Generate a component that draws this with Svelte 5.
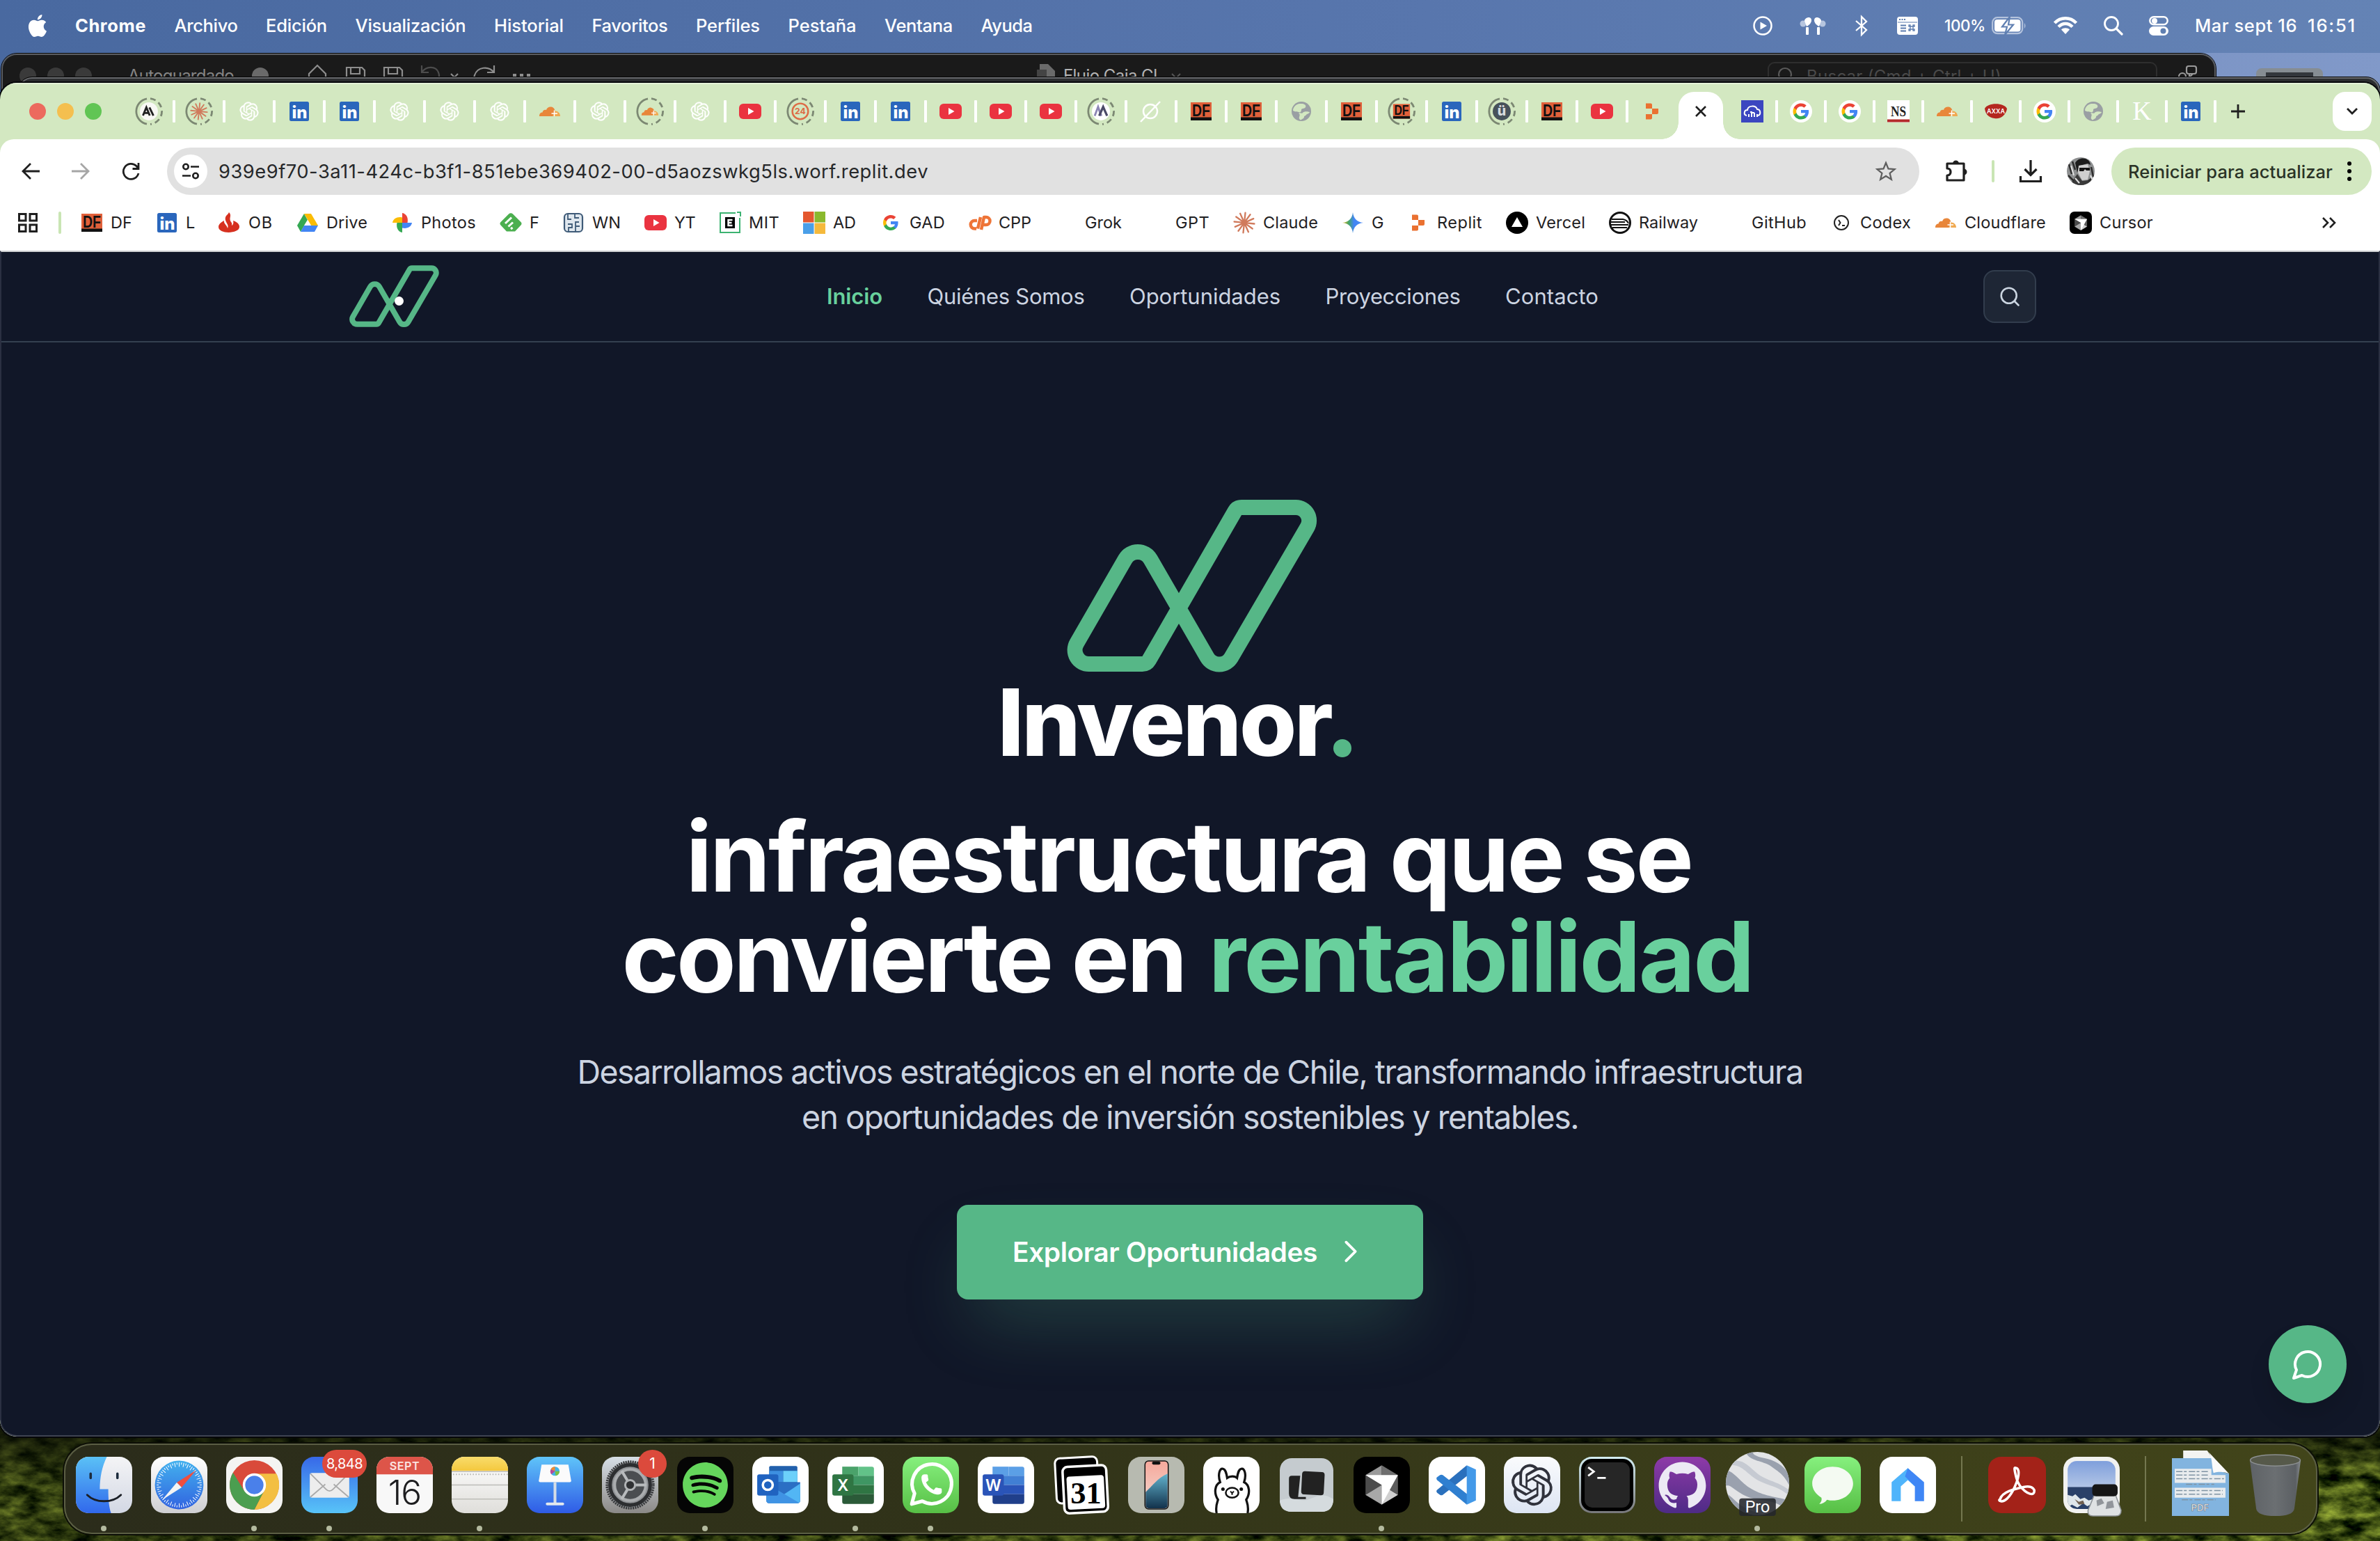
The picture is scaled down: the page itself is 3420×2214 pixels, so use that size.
<script>
  // Spreads or tightens the letters of an element so that it takes `target` pixels.
  function fit(node, target) {
    const natural = node.getBoundingClientRect().width;
    const count = Math.max(1, node.textContent.trim().length);
    node.style.letterSpacing = `${(target - natural) / count}px`;
  }

  const menus = [
    ['Archivo', 91], ['Edición', 88], ['Visualización', 159], ['Historial', 100],
    ['Favoritos', 109], ['Perfiles', 92], ['Pestaña', 98], ['Ventana', 98], ['Ayuda', 74]
  ];

  const tabs = [
    ['anthropic', 1], ['claude', 1], ['gpt'], ['in'], ['in'], ['gpt'], ['gpt'], ['gpt'], ['cloud'], ['gpt'],
    ['cloud', 1], ['gpt'], ['yt'], ['n24', 1], ['in'], ['in'], ['yt'], ['yt'], ['yt'], ['mm', 1], ['grok'],
    ['df'], ['df'], ['globe'], ['df'], ['df', 1], ['in'], ['uu', 1], ['df'], ['yt'], ['replit']
  ];
  const tabsAfter = ['rain', 'gc', 'gc', 'ns', 'cloud', 'axxa', 'gc', 'globe', 'kk', 'in'];

  const bookmarks = [
    ['df', 'DF', 31], ['in', 'L', 13], ['santander', 'OB', 35], ['drive', 'Drive', 59], ['photos', 'Photos', 79],
    ['feedly', 'F', 13], ['wn', 'WN', 41], ['yt', 'YT', 30], ['mit', 'MIT', 44], ['ms', 'AD', 33], ['g', 'GAD', 51],
    ['cpp', 'CPP', 47], ['none', 'Grok', 53], ['none', 'GPT', 49], ['claude', 'Claude', 79], ['gemini', 'G', 17],
    ['replit', 'Replit', 65], ['vercel', 'Vercel', 71], ['railway', 'Railway', 85], ['none', 'GitHub', 79],
    ['codex', 'Codex', 73], ['cloud', 'Cloudflare', 117], ['cursor', 'Cursor', 77]
  ];

  const links = [['Quiénes Somos', 226], ['Oportunidades', 217], ['Proyecciones', 194], ['Contacto', 134]];

  const dock = [
    { k: 'finder', dot: true }, { k: 'safari' }, { k: 'chrome', dot: true }, { k: 'mail', dot: true, badge: '8,848' },
    { k: 'calendar' }, { k: 'notes', dot: true }, { k: 'keynote' }, { k: 'settings', badge: '1' },
    { k: 'spotify', dot: true }, { k: 'outlook' }, { k: 'excel', dot: true }, { k: 'whatsapp', dot: true },
    { k: 'word' }, { k: 'cal31' }, { k: 'iphone' }, { k: 'ollama' }, { k: 'tablets' }, { k: 'cursor', dot: true },
    { k: 'vscode' }, { k: 'chatgpt' }, { k: 'terminal' }, { k: 'github' }, { k: 'earth', dot: true },
    { k: 'messages' }, { k: 'homeapp' }, { k: 'sep' }, { k: 'acrobat' }, { k: 'preview' }, { k: 'sep' },
    { k: 'pdf' }, { k: 'trash' }
  ];

  const rays = Array.from({ length: 12 }, (_, i) => i * 30 + 6);
  const ticks = Array.from({ length: 60 }, (_, i) => i * 6);
  const knot = 'M22.2819 9.8211a5.9847 5.9847 0 0 0-.5157-4.9108 6.0462 6.0462 0 0 0-6.5098-2.9A6.0651 6.0651 0 0 0 4.9807 4.1818a5.9847 5.9847 0 0 0-3.9977 2.9 6.0462 6.0462 0 0 0 .7427 7.0966 5.98 5.98 0 0 0 .511 4.9107 6.051 6.051 0 0 0 6.5146 2.9001A5.9847 5.9847 0 0 0 13.2599 24a6.0557 6.0557 0 0 0 5.7718-4.2058 5.9894 5.9894 0 0 0 3.9977-2.9001 6.0557 6.0557 0 0 0-.7475-7.0729zm-9.022 12.6081a4.4755 4.4755 0 0 1-2.8764-1.0408l.1419-.0804 4.7783-2.7582a.7948.7948 0 0 0 .3927-.6813v-6.7369l2.02 1.1686a.071.071 0 0 1 .038.052v5.5826a4.504 4.504 0 0 1-4.4945 4.4944zm-9.6607-4.1254a4.4708 4.4708 0 0 1-.5346-3.0137l.142.0852 4.783 2.7582a.7712.7712 0 0 0 .7806 0l5.8428-3.3685v2.3324a.0804.0804 0 0 1-.0332.0615L9.74 19.9502a4.4992 4.4992 0 0 1-6.1408-1.6464zM2.3408 7.8956a4.485 4.485 0 0 1 2.3655-1.9728V11.6a.7664.7664 0 0 0 .3879.6765l5.8144 3.3543-2.0201 1.1685a.0757.0757 0 0 1-.071 0l-4.8303-2.7865A4.504 4.504 0 0 1 2.3408 7.872zm16.5963 3.8558L13.1038 8.364 15.1192 7.2a.0757.0757 0 0 1 .071 0l4.8303 2.7913a4.4944 4.4944 0 0 1-.6765 8.1042v-5.6772a.79.79 0 0 0-.407-.667zm2.0107-3.0231l-.142-.0852-4.7735-2.7818a.7759.7759 0 0 0-.7854 0L9.409 9.2297V6.8974a.0662.0662 0 0 1 .0284-.0615l4.8303-2.7866a4.4992 4.4992 0 0 1 6.6802 4.66zM8.3065 12.863l-2.02-1.1638a.0804.0804 0 0 1-.038-.0567V6.0742a4.4992 4.4992 0 0 1 7.3757-3.4537l-.142.0805L8.704 5.459a.7948.7948 0 0 0-.3927.6813zm1.0976-2.3654l2.602-1.4998 2.6069 1.4998v2.9994l-2.5974 1.4997-2.6067-1.4997Z';
</script>

{#snippet brandmark(cls)}
  <svg class={cls} viewBox="0 0 360 247" fill="none">
    <path
      d="M251 11H329A19 19 0 0 1 345.5 39.6L236.3 226.5A20 20 0 0 1 201.7 226.5L120.2 85.5A21 21 0 0 0 83.8 85.5L14.3 206A20 20 0 0 0 31.6 236H108.5A11 11 0 0 0 118 230.5L241.5 16.5A11 11 0 0 1 251 11Z"
      stroke="#56b787" stroke-width="22" />
  </svg>
{/snippet}

{#snippet googleG()}
  <path fill="#4285f4" d="M22.56 12.25c0-.78-.07-1.53-.2-2.25H12v4.26h5.92c-.26 1.37-1.04 2.53-2.21 3.31v2.77h3.57c2.08-1.92 3.28-4.74 3.28-8.09z" />
  <path fill="#34a853" d="M12 23c2.97 0 5.46-.98 7.28-2.66l-3.57-2.77c-.98.66-2.23 1.06-3.71 1.06-2.86 0-5.29-1.93-6.16-4.53H2.18v2.84C3.99 20.53 7.7 23 12 23z" />
  <path fill="#fbbc05" d="M5.84 14.09c-.22-.66-.35-1.36-.35-2.09s.13-1.43.35-2.09V7.07H2.18C1.43 8.55 1 10.22 1 12s.43 3.45 1.18 4.93l2.85-2.22.81-.62z" />
  <path fill="#ea4335" d="M12 5.38c1.62 0 3.06.56 4.21 1.64l3.15-3.15C17.45 2.09 14.97 1 12 1 7.7 1 3.99 3.47 2.18 7.07l3.66 2.84c.87-2.6 3.3-4.53 6.16-4.53z" />
{/snippet}

{#snippet crystal()}
  <path fill="#6f6f6f" d="M40 12 63 26 40 40Z" />
  <path fill="#9a9a9a" d="M40 12 17 26 40 40Z" />
  <path fill="#4c4c4c" d="M17 26V54L40 40Z" />
  <path fill="#5d5d5d" d="M63 26V54L40 40Z" />
  <path fill="#a8a8a8" d="M17 54 40 68V40Z" />
  <path fill="#d0d0d0" d="M63 54 40 68V40Z" />
  <path fill="#fff" d="M17 26H63L40 68V40Z" />
{/snippet}

{#snippet glyph(kind)}
  {#if kind === 'anthropic'}
    <circle cx="16" cy="16" r="16" fill="#f8f8f4" />
    <path d="M5.500 23.500 11.500 9 17.500 23.500M8 19H15M17 9 24 23.500" fill="none" stroke="#222" stroke-width="3.600" />
  {:else if kind === 'claude'}
    {#each rays as a}
      <line x1="16" y1="12.500" x2="16" y2="1.500" stroke="#d07a5c" stroke-width="2.300" stroke-linecap="round" transform="rotate({a} 16 16)" />
    {/each}
    <circle cx="16" cy="16" r="4.500" fill="#d07a5c" />
  {:else if kind === 'gpt'}
    <path transform="translate(2.500 2.500) scale(1.125)" fill="#fff" stroke="#fff" stroke-width=".3" d={knot} />
  {:else if kind === 'in'}
    <rect x="2" y="2" width="28" height="28" rx="2.500" fill="#2a66bc" />
    <text x="16.500" y="25.500" class="t-in">in</text>
  {:else if kind === 'cloud'}
    <path fill="#e8863a" d="M1 23c0-4 2-5.500 4.500-5.500.5-3 3-4.500 5.500-3.500 1-3.500 4-5 7-4.500 3.500.5 5.500 3.500 5.500 6.500L21 23Z" />
    <path fill="#f0a951" d="M20 23 23 15.500c4.500-.5 8 3 8 7.500Z" />
    <path d="M22.500 14.500V23M18.500 19H27" stroke="#fff" stroke-width="1.500" />
  {:else if kind === 'yt'}
    <rect x="0" y="5" width="32" height="22" rx="6" fill="#ea3340" />
    <path fill="#fff" d="M13 11V21L21.500 16Z" />
  {:else if kind === 'n24'}
    <circle cx="16" cy="16" r="14" fill="none" stroke="#dd6b46" stroke-width="3" />
    <text x="16" y="21.500" class="t-24">24</text>
  {:else if kind === 'mm'}
    <circle cx="16" cy="16" r="16" fill="#fff" />
    <path d="M5 24 11 8 15 20M11 8 17 24" fill="none" stroke="#8c86b4" stroke-width="3.500" />
    <path d="M13 24 20 8 27 24" fill="none" stroke="#4a4a66" stroke-width="4" />
  {:else if kind === 'grok'}
    <circle cx="15" cy="16" r="10" fill="none" stroke="#fff" stroke-width="2.500" />
    <path d="M1 31 29 2" stroke="#fff" stroke-width="2.500" />
  {:else if kind === 'df'}
    <rect x="1" y="3" width="30" height="26" fill="#e0603a" />
    <rect x="1" y="24.500" width="30" height="4.500" fill="#111" />
    <text x="16" y="22.500" class="t-df" textLength="26" lengthAdjust="spacingAndGlyphs">DF</text>
  {:else if kind === 'globe'}
    <circle cx="16" cy="16" r="14" fill="#9a9fa3" />
    <path fill="#d3e8c1" d="M18 5c4 1 5 3 4 5-2 3-6 1-6 4s-2 4-4 3-5 0-8-2c0-5 4-9 9-10ZM28 17c-1 3-4 2-5 4s-3 1-3 3-3 3-4 4-4-1-3-4 1-4-1-5c2-2 5 1 6-1s7-2 10-1Z" />
  {:else if kind === 'uu'}
    <circle cx="16" cy="16" r="16" fill="#47525a" />
    <text x="16" y="24" class="t-uu">ü</text>
  {:else if kind === 'replit'}
    <path fill="#ea7131" d="M7 4.500H14a2 2 0 0 1 2 2V12H7ZM16 12H25V18a2 2 0 0 1-2 2H16ZM7 20H16V25.500a2 2 0 0 1-2 2H7Z" />
  {:else if kind === 'rain'}
    <rect width="32" height="32" fill="#3b46c0" />
    <path d="M8 22c-5-1-4-8 1-8 1-7 12-7 14-1 5 0 6 8 1 9M11 24V20M15 24V17H13M19 24V18M23 24V20M15 18H19" fill="none" stroke="#fff" stroke-width="2" />
  {:else if kind === 'gc'}
    <circle cx="16" cy="16" r="16" fill="#fff" />
    <g transform="translate(3.400 3.400) scale(1.050)">{@render googleG()}</g>
  {:else if kind === 'g'}
    <g transform="translate(4 4)">{@render googleG()}</g>
  {:else if kind === 'ns'}
    <rect width="32" height="32" fill="#fff" />
    <rect y="27.500" width="32" height="4" fill="#b42a2a" />
    <text x="16" y="23" class="t-ns" textLength="22" lengthAdjust="spacingAndGlyphs">NS</text>
  {:else if kind === 'axxa'}
    <path fill="#b4271f" d="M0 12C4 3 28 3 32 12C31 21 22 28 14 26C6 25 1 20 0 12Z" />
    <text x="16" y="18.500" class="t-ax">AXXA</text>
  {:else if kind === 'kk'}
    <text x="16" y="28" class="t-kk">K</text>
  {:else if kind === 'santander'}
    <path fill="#d6301f" d="M15 1c5 5-1 8 3 14 2 2 1 4 1 5 2-1 3-4 2-7 6 2 9 5 9 9 0 10-30 11-30 0 0-4 4-7 8-9-1 4 4 6 5 11 3-6-5-9-3-16 1-3 4-4 5-7Z" />
  {:else if kind === 'drive'}
    <path fill="#34a853" d="M11 3 1 20 6 29 16 12Z" />
    <path fill="#fbbc04" d="M11 3H21L31 20H21Z" />
    <path fill="#4285f4" d="M11 20H31L26 29H6Z" />
    <path fill="#fff" d="M16 12 21 20H11Z" />
  {:else if kind === 'photos'}
    <path fill="#ea4335" d="M16 2v14h7.500C25 9 22 3 16 2Z" />
    <path fill="#4285f4" d="M30 16H16v7.500C23 25 29 22 30 16Z" />
    <path fill="#34a853" d="M16 30V16H8.500C7 23 10 29 16 30Z" />
    <path fill="#fbbc04" d="M2 16H16V8.500C9 7 3 10 2 16Z" />
  {:else if kind === 'feedly'}
    <path fill="#4caf50" d="M13 3.500a4 4 0 0 1 6 0L30.500 15a3 3 0 0 1 0 4.500L22 28.500H10L1.500 19.500a3 3 0 0 1 0-4.500Z" />
    <path d="M8 17 17 8.500M12.500 21.500 19 15.500M16 25 18.500 23" stroke="#fff" stroke-width="3" />
  {:else if kind === 'wn'}
    <rect x="3" y="3" width="26" height="26" rx="5" fill="#dfe7ee" stroke="#3f5b78" stroke-width="2.200" />
    <path d="M8 4V11H13M18 4V9H24M9 28V23H14V18H8M19 28V15H24M19 21H25" fill="none" stroke="#3f5b78" stroke-width="1.800" />
  {:else if kind === 'mit'}
    <path d="M24 2H2V30H30V9M26 1H31V7" fill="none" stroke="#3cb371" stroke-width="2" />
    <rect x="9" y="8" width="14" height="16" fill="#000" />
    <path d="M19.500 12H13.500V20H19.500M13.500 16H18.500" fill="none" stroke="#fff" stroke-width="2.400" />
  {:else if kind === 'ms'}
    <path fill="#e4572e" d="M0 0H15.500V15.500H0Z" />
    <path fill="#8ab92d" d="M16.500 0H32V15.500H16.500Z" />
    <path fill="#4a9fe8" d="M0 16.500H15.500V32H0Z" />
    <path fill="#f5b93c" d="M16.500 16.500H32V32H16.500Z" />
  {:else if kind === 'cpp'}
    <path d="M12 13H8.500a5.500 5.500 0 0 0 0 11.500H11M13 24.500 17 8M18 26 22 8H25a5 5 0 0 1 0 11H20" fill="none" stroke="#ee7437" stroke-width="4.500" stroke-linejoin="round" />
  {:else if kind === 'gemini'}
    <path fill="url(#gem)" d="M16 1C17 10 22 15 31 16 22 17 17 22 16 31 15 22 10 17 1 16 10 15 15 10 16 1Z" />
  {:else if kind === 'vercel'}
    <circle cx="16" cy="16" r="16" fill="#000" />
    <path fill="#fff" d="M16 8 24 22H8Z" />
  {:else if kind === 'railway'}
    <circle cx="16" cy="16" r="14.500" fill="#fff" stroke="#111" stroke-width="3" />
    <path d="M4 11H20c5 1 7 3 8 6M3 15H23M3 19H28M5 23H26" fill="none" stroke="#111" stroke-width="2" />
  {:else if kind === 'codex'}
    <circle cx="16" cy="16" r="10" fill="none" stroke="#222" stroke-width="2" />
    <path d="M12 12 14.500 16 12 20M17 20H21" fill="none" stroke="#222" stroke-width="2" />
  {:else if kind === 'cursor'}
    <rect width="32" height="32" rx="7" fill="#000" />
    <g transform="translate(0.500 0.500) scale(.39)">{@render crystal()}</g>
  {/if}
{/snippet}

{#snippet tabIcon(kind, ring)}
  {#if ring}
    <svg class="ring" viewBox="0 0 40 40">
      <path d="M17 1.800A18.500 18.500 0 0 0 17 38.200" fill="none" stroke="#7c8873" stroke-width="2.800" />
      <path d="M22 1.600A18.500 18.500 0 0 1 22 38.400" fill="none" stroke="#7c8873" stroke-width="2.800" stroke-dasharray="8 5" />
      <g transform="translate(7 7) scale(.81)">{@render glyph(kind)}</g>
    </svg>
  {:else}
    <svg class="fav" viewBox="0 0 32 32">{@render glyph(kind)}</svg>
  {/if}
{/snippet}

{#snippet office(letter, a, b, c, d, e)}
  <rect width="80" height="80" rx="18" fill="#fff" />
  <path fill={a} d="M21 14H44V27H21Z" /><path fill={b} d="M44 14H63a3 3 0 0 1 3 3V27H44Z" />
  <path fill={c} d="M21 27H66V40H21Z" /><path fill={d} d="M21 40H66V53H21Z" />
  <path fill={e} d="M21 53H66V64a3 3 0 0 1-3 3H24a3 3 0 0 1-3-3Z" />
  <rect x="7" y="25" width="30" height="30" rx="3" fill={d} />
  <text x="22" y="48" class="t-off">{letter}</text>
{/snippet}

{#snippet app(k)}
  {#if k === 'finder'}
    <rect width="80" height="80" rx="18" fill="url(#finR)" />
    <path fill="url(#finL)" d="M18 0H44C37 14 34 30 34 46H46C46 60 47 72 50 80H18A18 18 0 0 1 0 62V18A18 18 0 0 1 18 0Z" />
    <path d="M21 24V30M59 24V30" stroke="#1c2b3c" stroke-width="3.500" stroke-linecap="round" />
    <path d="M16 54C28 66 52 66 64 54" fill="none" stroke="#1b1f26" stroke-width="2.800" stroke-linecap="round" />
  {:else if k === 'safari'}
    <rect width="80" height="80" rx="18" fill="url(#whiteG)" />
    <circle cx="40" cy="40" r="34.500" fill="url(#safG)" />
    {#each ticks as a, i}
      <line x1="40" y1="8" x2="40" y2={i % 2 ? 11 : 14} stroke="#fff" stroke-width="1" transform="rotate({a} 40 40)" />
    {/each}
    <path fill="#f04e3e" d="M64 19 43.500 43.500 36.500 36.500Z" />
    <path fill="#f4f4f4" d="M16 61 43.500 43.500 36.500 36.500Z" />
  {:else if k === 'chrome'}
    <rect width="80" height="80" rx="18" fill="#f4f4f2" />
    <circle cx="40" cy="40" r="35" fill="#d94a3a" />
    <path fill="#f3bf42" d="M71.300 24H40L54 48 40 75A35 35 0 0 0 71.300 24Z" />
    <path fill="#4b9e50" d="M9.700 22.500 26 49 54 48 40 75A35 35 0 0 1 9.700 22.500Z" />
    <circle cx="40" cy="40" r="16.500" fill="#fff" /><circle cx="40" cy="40" r="13" fill="#4a80ea" />
  {:else if k === 'mail'}
    <rect width="80" height="80" rx="18" fill="url(#mailG)" />
    <rect x="12" y="23" width="56" height="35" rx="3" fill="#ededed" />
    <path d="M13 57 34 39M67 57 46 39M13 24 35 46Q40 51 45 46L67 24" fill="none" stroke="#aaa" stroke-width="1.800" />
  {:else if k === 'calendar'}
    <rect width="80" height="80" rx="18" fill="#f8f8f8" />
    <path fill="#dd5549" d="M18 0H62A18 18 0 0 1 80 18V25H0V18A18 18 0 0 1 18 0Z" />
    <text x="40" y="19" class="t-sept">SEPT</text>
    <text x="40" y="68" class="t-16">16</text>
  {:else if k === 'notes'}
    <rect width="80" height="80" rx="18" fill="url(#noteG)" />
    <path fill="url(#noteY)" d="M18 0H62A18 18 0 0 1 80 18V20H0V18A18 18 0 0 1 18 0Z" />
    <path d="M0 21H80M0 40H80M0 60H80" stroke="#bdbdb8" stroke-width="1.500" />
    <path d="M2 25H80" stroke="#b5b5b0" stroke-width="2" stroke-dasharray="1.500 2.500" />
  {:else if k === 'keynote'}
    <rect width="80" height="80" rx="18" fill="url(#keyG)" />
    <path fill="#fbfbfb" d="M21 11H59L63 34Q63 36 61 36H19Q17 36 17 34Z" />
    <path fill="#d5dde6" d="M38 36H42V66H38Z" /><rect x="27" y="65" width="26" height="4" rx="2" fill="#e4e9ee" />
    <circle cx="40" cy="20.500" r="6.500" fill="#42b3e8" />
    <path fill="#ef8a32" d="M40 20.500V14A6.500 6.500 0 0 0 34 18Z" /><path fill="#7bc043" d="M40 20.500H46.500A6.500 6.500 0 0 1 41 27Z" /><path fill="#b54a9c" d="M40 20.500 34 18A6.500 6.500 0 0 0 35 25Z" />
  {:else if k === 'settings'}
    <rect width="80" height="80" rx="18" fill="url(#setG)" />
    <circle cx="40" cy="40" r="33" fill="#8f9295" stroke="#37393b" stroke-width="3.500" stroke-dasharray="2 1.300" />
    <circle cx="40" cy="40" r="28.500" fill="none" stroke="#2c2e30" stroke-width="5" />
    <circle cx="40" cy="40" r="22" fill="#4b4e51" stroke="#a9acae" stroke-width="4" />
    <path d="M40 40H63M40 40 28 20M40 40 28 60" stroke="#b8bbbd" stroke-width="4" />
    <circle cx="40" cy="40" r="7" fill="#2f3133" stroke="#b0b3b5" stroke-width="3" />
  {:else if k === 'spotify'}
    <rect width="80" height="80" rx="18" fill="#050505" />
    <path transform="translate(8 8) scale(2.667)" fill="#65d65c" d="M12 0C5.4 0 0 5.4 0 12s5.4 12 12 12 12-5.4 12-12S18.660 0 12 0zm5.521 17.340c-.24.359-.66.48-1.021.24-2.820-1.740-6.360-2.101-10.561-1.141-.418.122-.779-.179-.899-.539-.12-.421.18-.78.54-.9 4.560-1.021 8.520-.6 11.640 1.320.42.18.479.659.301 1.020zm1.440-3.300c-.301.42-.841.6-1.262.3-3.239-1.980-8.159-2.580-11.939-1.380-.479.12-1.020-.12-1.140-.6-.12-.48.12-1.021.6-1.141C9.600 9.900 15 10.561 18.720 12.840c.361.181.54.78.241 1.200zm.12-3.360C15.240 8.400 8.820 8.160 5.160 9.301c-.6.179-1.200-.181-1.380-.721-.18-.601.18-1.200.72-1.381 4.260-1.260 11.280-1.020 15.721 1.621.539.3.719 1.020.419 1.560-.299.421-1.020.599-1.559.3z" />
  {:else if k === 'outlook'}
    <rect width="80" height="80" rx="18" fill="#fff" />
    <rect x="24" y="13" width="40" height="28" rx="2" fill="#2160ac" />
    <path fill="#3d8fe0" d="M24 20H44V36H24Z" /><path fill="#6cd0fa" d="M44 20H64V36H44Z" />
    <path fill="#2b6fc4" d="M20 36H68V62a4 4 0 0 1-4 4H24a4 4 0 0 1-4-4Z" />
    <path fill="#52b6f4" d="M68 38V62a4 4 0 0 1-4 4H26Z" /><path fill="#3f93e4" d="M20 38 66 65a4 4 0 0 1-2 1H24a4 4 0 0 1-4-4Z" />
    <rect x="7" y="25" width="30" height="30" rx="3" fill="#2063c0" />
    <circle cx="22" cy="40" r="7" fill="none" stroke="#fff" stroke-width="3.500" />
  {:else if k === 'excel'}
    {@render office('X', '#4aa26a', '#62c288', '#3f9663', '#2f7543', '#2b5a38')}
  {:else if k === 'word'}
    {@render office('W', '#5b9fe6', '#5b9fe6', '#417fd4', '#2a54b8', '#203f8a')}
  {:else if k === 'whatsapp'}
    <rect width="80" height="80" rx="18" fill="url(#waG)" />
    <path d="M13 67 17 52A28 28 0 1 1 28 63Z" fill="none" stroke="#fff" stroke-width="5" stroke-linejoin="round" />
    <path transform="translate(22 20) scale(1.600)" fill="#fff" d="M20 15.400c-1.200 0-2.400-.2-3.500-.6-.35-.12-.74-.03-1 .24l-1.600 2c-2.800-1.350-5.500-3.900-6.900-6.800l1.950-1.660c.27-.28.35-.67.24-1.020-.37-1.100-.56-2.300-.56-3.530 0-.54-.45-.99-.99-.99H5.500C3.650 3 3 5 3 6 3 14 11 21 18 21c2 0 3-1.500 3-2v-2.600c0-.54-.45-.99-.99-.99z" />
  {:else if k === 'cal31'}
    <rect x="4" y="1" width="60" height="64" rx="7" fill="#000" stroke="#fff" stroke-width="3" transform="rotate(-3 34 32)" />
    <rect x="15" y="13" width="62" height="66" rx="7" fill="#000" stroke="#fff" stroke-width="3.500" transform="rotate(-3 46 46)" />
    <rect x="20" y="27" width="53" height="47" rx="4" fill="#fff" transform="rotate(-3 46 46)" />
    <text x="47" y="66" class="t-31">31</text>
  {:else if k === 'iphone'}
    <rect width="80" height="80" rx="18" fill="#b7bab0" />
    <rect x="24" y="6" width="33" height="68" rx="5" fill="url(#phG)" stroke="#111" stroke-width="1.500" />
    <path fill="url(#phB)" d="M25 50C34 42 42 30 56 24V69a4 4 0 0 1-4 4H29a4 4 0 0 1-4-4Z" />
    <rect x="34" y="7" width="12" height="4" rx="2" fill="#111" />
  {:else if k === 'ollama'}
    <rect width="80" height="80" rx="18" fill="#fff" />
    <path d="M19 80C17 70 20 65 21 61 15 52 16 40 24 36 20 24 24 16 28 17 32 18 33 24 34 30 38 27 45 27 48 30 49 24 50 18 54 17 58 16 62 24 58 36 66 40 67 52 61 61 62 65 65 70 63 80" fill="none" stroke="#111" stroke-width="3.200" />
    <ellipse cx="41" cy="51" rx="9" ry="7" fill="none" stroke="#111" stroke-width="2.500" />
    <path d="M38.500 49 41 51.500 43.500 49M41 51V54" fill="none" stroke="#111" stroke-width="2" /><circle cx="28" cy="46" r="2.500" fill="#111" /><circle cx="54" cy="46" r="2.500" fill="#111" />
  {:else if k === 'tablets'}
    <rect x="2" y="2" width="76" height="76" rx="17" fill="#c5cbcf" />
    <path fill="#d5dbde" d="M2 62C20 54 30 66 44 60S66 52 78 60C78 72 72 78 62 78H18C8 78 2 72 2 62Z" />
    <rect x="33" y="21" width="32" height="33" rx="4" fill="#222" transform="rotate(3 48 38)" />
    <path fill="#222" d="M19 27H31L28 57H39V60H23Q15 60 15 52V31Q15 27 19 27Z" />
  {:else if k === 'cursor'}
    <rect width="80" height="80" rx="18" fill="#000" />
    {@render crystal()}
  {:else if k === 'vscode'}
    <rect width="80" height="80" rx="18" fill="#fff" />
    <path fill="#2a70bd" d="M54 12 12 47Q10 49 12 51L16 54Q18 55 20 54L56 26Z" />
    <path fill="#2f7fd0" d="M54 68 12 33Q10 31 12 29L16 26Q18 25 20 26L56 54Z" />
    <path fill="#4399e8" d="M54 12 67 18V62L54 68Z" />
  {:else if k === 'chatgpt'}
    <rect width="80" height="80" rx="18" fill="url(#cgG)" />
    <path transform="translate(10.500 10.500) scale(2.450)" fill="#30323c" d={knot} />
  {:else if k === 'terminal'}
    <rect width="80" height="80" rx="18" fill="url(#teG)" />
    <rect x="3" y="3" width="74" height="74" rx="15" fill="#000" /><rect x="8" y="8" width="64" height="64" rx="11" fill="#262626" />
    <path d="M13 15 21 21 13 27M26 30H38" fill="none" stroke="#fff" stroke-width="2.800" />
  {:else if k === 'github'}
    <rect width="80" height="80" rx="18" fill="url(#ghG)" />
    <path transform="translate(6.500 6.500) scale(2.790)" fill="#ece9f4" d="M12 .297c-6.630 0-12 5.373-12 12 0 5.303 3.438 9.800 8.205 11.385.6.113.82-.258.82-.577 0-.285-.01-1.040-.015-2.040-3.338.724-4.042-1.610-4.042-1.610C4.422 18.070 3.633 17.700 3.633 17.700c-1.087-.744.084-.729.084-.729 1.205.084 1.838 1.236 1.838 1.236 1.070 1.835 2.809 1.305 3.495.998.108-.776.417-1.305.76-1.605-2.665-.3-5.466-1.332-5.466-5.930 0-1.310.465-2.380 1.235-3.220-.135-.303-.54-1.523.105-3.176 0 0 1.005-.322 3.300 1.230.96-.267 1.980-.399 3-.405 1.020.006 2.040.138 3 .405 2.280-1.552 3.285-1.230 3.285-1.230.645 1.653.24 2.873.12 3.176.765.84 1.230 1.910 1.230 3.220 0 4.610-2.805 5.625-5.475 5.920.42.36.81 1.096.81 2.220 0 1.606-.015 2.896-.015 3.286 0 .315.21.69.825.57C20.565 22.092 24 17.592 24 12.297c0-6.627-5.373-12-12-12" />
  {:else if k === 'earth'}
    <clipPath id="globeClip"><circle cx="40" cy="38" r="45" /></clipPath>
    <g clip-path="url(#globeClip)">
      <rect x="-6" y="-8" width="92" height="92" fill="#e3e4e6" />
      <path fill="#9aa1ae" d="M22-8C30 8 46 4 60 14S78 26 88 46V30C80 16 70 6 50 2S34-6 32-12ZM-8 18C8 20 14 36 32 46S62 56 86 62L80 74C60 58 38 64 20 54S2 38-8 42ZM-4 52C8 60 14 70 30 76S52 82 60 90H20Z" />
      <path fill="#c6cad2" d="M2 12C18 10 26 26 42 34S70 42 86 56V48C68 34 52 34 40 24S20 4 8 6Z" />
    </g>
    <rect x="14" y="59" width="52" height="25" rx="4" fill="#23262b" opacity=".88" />
    <text x="40" y="79" class="t-pro">Pro</text>
  {:else if k === 'messages'}
    <rect width="80" height="80" rx="18" fill="url(#waG)" />
    <path fill="#f4faf2" d="M40 14C57 14 69 25 69 38S57 62 40 62C37 62 35 62 32 61 29 65 25 67 21 67 24 64 25 61 24 58 16 53 11 46 11 38 11 25 23 14 40 14Z" />
  {:else if k === 'homeapp'}
    <rect width="80" height="80" rx="18" fill="#fff" />
    <path fill="#4fb4fb" d="M40 16 17 36V63H30V42L40 33 50 42V36Z" />
    <path fill="#3f86f5" d="M40 16 63 36V63H50V42L36 28Z" />
  {:else if k === 'acrobat'}
    <rect width="82" height="80" rx="18" fill="#a32218" />
    <path d="M17 60C20 50 36 46 50 43S68 48 64 52 44 46 40 30 37 15 40 16 46 24 38 42 22 64 18 63 16 61 17 60Z" fill="none" stroke="#fff" stroke-width="3.500" />
  {:else if k === 'preview'}
    <rect width="80" height="80" rx="18" fill="#f2f2f0" />
    <clipPath id="photoClip"><rect x="6" y="6" width="68" height="68" rx="13" /></clipPath>
    <g clip-path="url(#photoClip)">
      <rect x="6" y="6" width="68" height="38" fill="url(#skyG)" />
      <path fill="#2a4068" d="M6 43H74V76H6Z" />
      <path fill="#dfe6ea" d="M6 54 13 56 17 53 24 60 30 58 36 62 42 60V66L34 70 28 66 20 72 12 68 6 72Z" />
      <path fill="#6f5f50" d="M16 60 22 64 28 62 30 67 22 68Z" />
    </g>
    <path fill="#dfe2e3" stroke="#8d9296" stroke-width="1.500" d="M44 54H74L82 76Q82 84 74 84H42Q34 84 35 76Z" />
    <path fill="#6f757b" d="M47 62 54 59 58 66 48 70ZM62 64 70 62 72 72 60 74Z" opacity=".7" />
    <rect x="41" y="39" width="36" height="17" rx="5" fill="#161616" />
  {:else if k === 'pdf'}
    <path fill="#f4f4f2" d="M16-9H50L60 6V20H16Z" />
    <path fill="#82b4df" d="M0 2H59V18L81 24V84H0Z" />
    <path fill="#e9ecee" d="M4 17H56V37H4ZM4 44H76V58H4ZM56 26H76V37H56Z" />
    <path d="M6 21H52M6 26H52M6 31H74M6 48H72M6 53H72M20 39H60M14 61H62" stroke="#7f93a3" stroke-width="1.500" stroke-dasharray="9 2 4 3" />
    <path fill="#fbfbfa" d="M50-9C58-2 56 12 59 23 68 20 76 22 81 24Z" />
    <text x="40" y="77" class="t-pdf">PDF</text>
  {:else if k === 'trash'}
    <path fill="url(#trG)" d="M4 6 13 74Q15 84 40 84T67 74L76 6Z" />
    <ellipse cx="40" cy="5" rx="35.500" ry="8" fill="#56594a" stroke="#8b8f90" stroke-width="1.500" />
  {/if}
{/snippet}

<svg class="defs" width="0" height="0">
  <defs>
    <linearGradient id="gem" x1="0" y1="0" x2="1" y2="0"><stop offset="0" stop-color="#f2b92e" /><stop offset=".3" stop-color="#45a564" /><stop offset=".55" stop-color="#4285f4" /><stop offset="1" stop-color="#4d8cf5" /></linearGradient>
    <linearGradient id="finL" x1="0" y1="0" x2="0" y2="1"><stop offset="0" stop-color="#5ac1f6" /><stop offset="1" stop-color="#3168ec" /></linearGradient>
    <linearGradient id="finR" x1="0" y1="0" x2="0" y2="1"><stop offset="0" stop-color="#f4f4f6" /><stop offset="1" stop-color="#d3d8e4" /></linearGradient>
    <linearGradient id="whiteG" x1="0" y1="0" x2="0" y2="1"><stop offset="0" stop-color="#fff" /><stop offset="1" stop-color="#cfcfd2" /></linearGradient>
    <linearGradient id="safG" x1="0" y1="0" x2="0" y2="1"><stop offset="0" stop-color="#43b1ee" /><stop offset="1" stop-color="#3163e0" /></linearGradient>
    <linearGradient id="mailG" x1="0" y1="0" x2="0" y2="1"><stop offset="0" stop-color="#3768e8" /><stop offset="1" stop-color="#58c4f8" /></linearGradient>
    <linearGradient id="noteG" x1="0" y1="0" x2="0" y2="1"><stop offset="0" stop-color="#fff" /><stop offset="1" stop-color="#dfdeda" /></linearGradient>
    <linearGradient id="noteY" x1="0" y1="0" x2="0" y2="1"><stop offset="0" stop-color="#f9dc6b" /><stop offset="1" stop-color="#f4c83e" /></linearGradient>
    <linearGradient id="keyG" x1="0" y1="0" x2="0" y2="1"><stop offset="0" stop-color="#5fc4f9" /><stop offset="1" stop-color="#2f5be6" /></linearGradient>
    <linearGradient id="setG" x1="0" y1="0" x2="0" y2="1"><stop offset="0" stop-color="#d7dfe6" /><stop offset="1" stop-color="#8b8987" /></linearGradient>
    <linearGradient id="waG" x1="0" y1="0" x2="0" y2="1"><stop offset="0" stop-color="#86f07e" /><stop offset="1" stop-color="#57bf45" /></linearGradient>
    <linearGradient id="phG" x1="0" y1="0" x2="0" y2="1"><stop offset="0" stop-color="#f6a89b" /><stop offset="1" stop-color="#f2dcd4" /></linearGradient>
    <linearGradient id="phB" x1="0" y1="0" x2="0" y2="1"><stop offset="0" stop-color="#63b4cf" /><stop offset="1" stop-color="#12324c" /></linearGradient>
    <linearGradient id="cgG" x1="0" y1="0" x2="0" y2="1"><stop offset="0" stop-color="#fafbfd" /><stop offset="1" stop-color="#dde5f3" /></linearGradient>
    <linearGradient id="teG" x1="0" y1="0" x2="0" y2="1"><stop offset="0" stop-color="#d3eef2" /><stop offset="1" stop-color="#77777a" /></linearGradient>
    <linearGradient id="ghG" x1="0" y1="0" x2="0" y2="1"><stop offset="0" stop-color="#8e3aa8" /><stop offset="1" stop-color="#4e2b86" /></linearGradient>
    <linearGradient id="skyG" x1="0" y1="0" x2="0" y2="1"><stop offset="0" stop-color="#7f9fdc" /><stop offset="1" stop-color="#b3c6e6" /></linearGradient>
    <linearGradient id="trG" x1="0" y1="0" x2="1" y2="0"><stop offset="0" stop-color="#5e6266" /><stop offset=".5" stop-color="#6b6f72" /><stop offset=".9" stop-color="#5b5f63" /><stop offset="1" stop-color="#8a8e92" /></linearGradient>
    <linearGradient id="shade" x1="0" y1="0" x2="1" y2="0"><stop offset="0" stop-color="#060803" stop-opacity=".3" /><stop offset=".6" stop-color="#060803" stop-opacity=".2" /><stop offset="1" stop-color="#060803" stop-opacity="0" /></linearGradient>
    <linearGradient id="shadeTop" x1="0" y1="0" x2="0" y2="1"><stop offset="0" stop-color="#050703" stop-opacity=".75" /><stop offset=".5" stop-color="#050703" stop-opacity="0" /></linearGradient>
  </defs>
</svg>

<div class="desktop">
  <svg class="grass" viewBox="0 0 3420 164" preserveAspectRatio="none">
    <filter id="turf" x="0" y="0" width="100%" height="100%" color-interpolation-filters="sRGB">
      <feTurbulence type="fractalNoise" baseFrequency=".03 .06" numOctaves="5" seed="7" />
      <feColorMatrix values="1 0 0 0 -.24  1.050 0 0 0 -.2  .4 0 0 0 -.12  0 0 0 0 1" />
    </filter>
    <rect width="3420" height="164" filter="url(#turf)" />
    <rect width="3420" height="164" fill="url(#shade)" />
    <rect width="3420" height="164" fill="url(#shadeTop)" />
  </svg>

  <div class="gadget"></div>

  <header class="menubar">
    <svg class="apple" viewBox="0 0 24 24" fill="#fff"><path d="M12.152 6.896c-.948 0-2.415-1.078-3.960-1.040-2.040.027-3.910 1.183-4.961 3.014-2.117 3.675-.546 9.103 1.519 12.090 1.013 1.454 2.208 3.090 3.792 3.039 1.520-.065 2.090-.987 3.935-.987 1.831 0 2.350.987 3.960.948 1.637-.026 2.676-1.480 3.676-2.948 1.156-1.688 1.636-3.325 1.662-3.415-.039-.013-3.182-1.221-3.220-4.857-.026-3.040 2.480-4.494 2.597-4.559-1.429-2.090-3.623-2.324-4.390-2.376-2-.156-3.675 1.090-4.610 1.090zM15.530 3.830c.843-1.012 1.400-2.427 1.245-3.830-1.207.052-2.662.805-3.532 1.818-.78.896-1.454 2.338-1.273 3.714 1.338.104 2.715-.688 3.559-1.701" /></svg>
    <nav class="menus">
      <b use:fit={102}>Chrome</b>
      {#each menus as [label, w]}<span use:fit={w}>{label}</span>{/each}
    </nav>
    <div class="status">
      <svg width="32" height="32" viewBox="0 0 32 32"><circle cx="16" cy="16" r="12.500" fill="none" stroke="#fff" stroke-width="2.500" /><path fill="#fff" d="M12.500 10.500V21.500L22 16Z" /></svg>
      <svg class="m36" width="40" height="32" viewBox="0 0 40 32"><g fill="#b6c5df"><circle cx="6" cy="13" r="4.500" /><circle cx="34" cy="13" r="4.500" /></g><g fill="#fff"><path d="M8 9C8 4 18 1 18 8 18 12 15 15 11 17Z" /><path d="M32 9C32 4 22 1 22 8 22 12 25 15 29 17Z" /><rect x="10" y="18" width="4" height="11" rx="1" /><rect x="26" y="18" width="4" height="11" rx="1" /></g></svg>
      <svg class="m36" width="28" height="32" viewBox="0 0 28 32"><path d="M6 9 21 22 14 29V3L21 10 6 23" fill="none" stroke="#fff" stroke-width="2.300" /></svg>
      <svg class="m36" width="32" height="32" viewBox="0 0 32 32"><rect x="1" y="3" width="30" height="26" rx="4" fill="#fff" /><path d="M4 7H14" stroke="#5c7cae" stroke-width="2" stroke-dasharray="2 1.500" /><path d="M2 11H30" stroke="#5c7cae" stroke-width="1" /><path d="M6 15.500H14M6 19.500H14M6 23.500H14" stroke="#5c7cae" stroke-width="1.800" /><path d="M20 17H24V21H20ZM20 17H18V15H20V17M24 17V15H26V17H24M20 21V23H18V21H20M24 21H26V23H24V21" fill="none" stroke="#5c7cae" stroke-width="1.300" /></svg>
      <span class="pct" use:fit={59}>100%</span>
      <svg class="m9" width="50" height="26" viewBox="0 0 50 26"><rect x="1.200" y="1.200" width="43" height="23" rx="7" fill="none" stroke="#b4c3dd" stroke-width="2.200" /><rect x="4" y="4" width="37.500" height="17.500" rx="4" fill="#fff" /><path d="M26 0 15 14.500H22L19 26 31 11.500H24Z" fill="#fff" stroke="#5f7fb1" stroke-width="2.200" /><path d="M47 9Q50 13 47 17Z" fill="#b4c3dd" /></svg>
      <svg class="wifi" width="36" height="28" viewBox="0 0 36 28"><g fill="none" stroke="#fff" stroke-width="4.500"><path d="M2.500 10C11 1 25 1 33.500 10" /><path d="M8 15.500C14 9.500 22 9.500 28 15.500" /></g><path fill="#fff" d="M18 26 12 19.500C15 16.500 21 16.500 24 19.500Z" /></svg>
      <svg class="m36" width="30" height="30" viewBox="0 0 30 30"><circle cx="12" cy="12" r="9.500" fill="none" stroke="#fff" stroke-width="2.800" /><path d="M19 19 27 27" stroke="#fff" stroke-width="3.200" stroke-linecap="round" /></svg>
      <svg class="m36" width="28" height="28" viewBox="0 0 28 28"><rect x="1.300" y="1.300" width="25.400" height="11" rx="5.500" fill="none" stroke="#fff" stroke-width="2.500" /><circle cx="8" cy="7" r="4" fill="#fff" /><rect x="0" y="15" width="28" height="13" rx="6.500" fill="#fff" /><circle cx="20.500" cy="21.500" r="4" fill="#5f7fb1" /></svg>
      <span class="date" use:fit={147}>Mar sept 16</span>
      <span class="time" use:fit={70}>16:51</span>
    </div>
  </header>

  <section class="window excel">
    <div class="xl-left">
      <i class="gdot"></i><i class="gdot"></i><i class="gdot"></i>
      <span class="auto" use:fit={152}>Autoguardado</span>
      <i class="knob"></i>
      <svg width="320" height="34" viewBox="0 0 320 34" fill="none" stroke="#8d8d8d" stroke-width="2.200">
        <path d="M4 32V14L16 2 28 14V32" /><path d="M58 32V5H80L84 9V32M64 5V14H77V5M64 32V23H78V32" />
        <path d="M112 32V5H134L138 9V32M118 5V14H131V5M118 32V23H132V32" /><path d="M166 2V12H176M166 12C172 3 186 2 190 12S186 26 178 32" stroke="#4c4c4c" />
        <path d="M208 14 213 19 218 14" /><path d="M270 2V12H260M270 12C262 2 246 4 242 16S246 30 250 33" /><path d="M297 16H302M307 16H312M317 16H322" stroke-width="4" />
      </svg>
    </div>
    <div class="xl-title">
      <svg width="26" height="34" viewBox="0 0 26 34"><path fill="#6a6a6a" d="M4 0H16L26 10V34H4Z" /><rect y="8" width="14" height="22" fill="#444" /></svg>
      <span use:fit={142}>Flujo Caja CL</span>
      <svg width="16" height="10" viewBox="0 0 16 10" fill="none" stroke="#555" stroke-width="2"><path d="M2 2 8 8 14 2" /></svg>
    </div>
    <div class="xl-search">
      <svg width="24" height="30" viewBox="0 0 24 30" fill="none" stroke="#5a5a5a" stroke-width="2.200"><circle cx="11" cy="12" r="9" /></svg>
      <span use:fit={280}>Buscar (Cmd + Ctrl + U)</span>
    </div>
    <svg class="xl-share" width="32" height="32" viewBox="0 0 32 32" fill="none" stroke="#9a9a9a" stroke-width="2.200"><rect x="14" y="2" width="14" height="11" rx="3" /><path d="M18 13V18L23 13" /><circle cx="8" cy="17" r="5" /></svg>
  </section>

  <section class="window back"></section>

  <main class="window chrome">
    <div class="tabs">
      <div class="lights"><i class="red"></i><i class="amber"></i><i class="green"></i></div>
      {#each tabs as [kind, ring], i}
        <div class="tab">{@render tabIcon(kind, ring)}</div>
        {#if i < tabs.length - 1}<i class="bar"></i>{/if}
      {/each}
      <div class="tab active">
        <svg width="20" height="20" viewBox="0 0 20 20" stroke="#1f1f1f" stroke-width="2.600"><path d="M3 3 17 17M17 3 3 17" /></svg>
      </div>
      {#each tabsAfter as kind}
        <div class="tab narrow">{@render tabIcon(kind, 0)}</div>
        <i class="bar"></i>
      {/each}
      <svg class="plus" width="24" height="24" viewBox="0 0 24 24" stroke="#1f1f1f" stroke-width="2.800"><path d="M12 2V22M2 12H22" /></svg>
      <div class="chev"><svg width="20" height="14" viewBox="0 0 20 14" fill="none" stroke="#1f1f1f" stroke-width="2.800"><path d="M3 3 10 10 17 3" /></svg></div>
    </div>

    <div class="toolbar">
      <div class="navs">
        <svg width="28" height="28" viewBox="0 0 28 28" fill="none" stroke="#1f1f1f" stroke-width="2.800"><path d="M27 14H4M14 3 3 14 14 25" /></svg>
        <svg width="28" height="28" viewBox="0 0 28 28" fill="none" stroke="#a6a6a6" stroke-width="2.800"><path d="M1 14H24M14 3 25 14 14 25" /></svg>
        <svg width="28" height="28" viewBox="0 0 28 28" fill="none" stroke="#1f1f1f" stroke-width="2.800"><path d="M25 17A11 11 0 1 1 22 6.500L24.500 9.500M25 2V10.500H16.500" /></svg>
      </div>
      <div class="omnibox">
        <div class="site"><svg width="26" height="26" viewBox="0 0 26 26" fill="none" stroke="#1f1f1f" stroke-width="2.600"><circle cx="6" cy="6.500" r="3.700" /><path d="M13 6.500H25M1 19.500H13" /><circle cx="20" cy="19.500" r="3.700" /></svg></div>
        <span use:fit={1020}>939e9f70-3a11-424c-b3f1-851ebe369402-00-d5aozswkg5ls.worf.replit.dev</span>
        <svg class="star" width="32" height="32" viewBox="0 0 24 24" fill="none" stroke="#5e5e5e" stroke-width="1.700"><path d="M12 3 14.600 9.300 21.400 9.800 16.200 14.200 17.900 20.900 12 17.200 6.100 20.900 7.800 14.200 2.600 9.800 9.400 9.300Z" /></svg>
      </div>
      <svg class="puzzle" width="36" height="36" viewBox="0 0 36 36"><path fill="none" stroke="#1f1f1f" stroke-width="3.200" stroke-linejoin="round" d="M4 7H28V31H4V24C8 24 9 21 9 19S8 14 4 14Z" /><path fill="#1f1f1f" d="M12 7a4.500 4.500 0 0 1 9 0ZM28 14.500a4.500 4.500 0 0 1 0 9Z" /></svg>
      <i class="vline"></i>
      <svg class="download" width="34" height="36" viewBox="0 0 34 36" fill="none" stroke="#1f1f1f" stroke-width="3.200"><path d="M17 2V23M8.500 15 17 23.500 25.500 15M2.500 25V32.500H31.500V25" /></svg>
      <svg class="avatar" width="40" height="40" viewBox="0 0 40 40"><clipPath id="av"><circle cx="20" cy="20" r="20" /></clipPath><g clip-path="url(#av)"><rect width="40" height="40" fill="#8d8f90" /><path fill="#1c1c1c" d="M12 8C18-2 33 0 34 11L30 9 18 12 15 22Z" /><path fill="#cfcfcf" d="M17 12 30 10 33 20 30 32 22 33 16 22Z" /><path fill="#151515" d="M18 15H33V19H28L26 17 24 20H18Z" /><path fill="#3a3a3a" d="M4 40 15 24 22 34 30 33 40 30V40Z" /><path d="M3 10 7 24M8 6 12 18M2 26 10 34M35 14 38 28M31 34 36 30" stroke="#2c2c2c" stroke-width="2.500" /><path d="M6 12 10 26M12 30 18 37M34 26 37 33" stroke="#e2e2e2" stroke-width="2" /></g></svg>
      <button class="restart">
        <span use:fit={294}>Reiniciar para actualizar</span>
        <svg width="6" height="30" viewBox="0 0 6 30"><circle cx="3" cy="4" r="3" /><circle cx="3" cy="15" r="3" /><circle cx="3" cy="26" r="3" /></svg>
      </button>
    </div>

    <div class="bookmarks">
      <svg class="grid" width="28" height="28" viewBox="0 0 28 28" fill="none" stroke="#1f1f1f" stroke-width="3"><path d="M1.500 1.500H11V11H1.500ZM17 1.500H26.500V11H17ZM1.500 17H11V26.500H1.500ZM17 17H26.500V26.500H17Z" /></svg>
      <i class="vline"></i>
      <div class="marks">
        {#each bookmarks as [kind, label, w]}
          <div class="mark">
            <svg class="fav" viewBox="0 0 32 32">{@render glyph(kind)}</svg>
            <span use:fit={w}>{label}</span>
          </div>
        {/each}
      </div>
      <svg class="more" width="22" height="18" viewBox="0 0 22 18" fill="none" stroke="#1f1f1f" stroke-width="2.600"><path d="M2 2 9 9 2 16M12 2 19 9 12 16" /></svg>
    </div>

    <div class="page">
      <header class="site-head">
        <div class="small-logo">{@render brandmark('mark-sm')}<i class="white-dot"></i></div>
        <nav class="site-nav">
          <a class="current" href="#inicio" use:fit={80}>Inicio</a>
          {#each links as [label, w]}<a href="#seccion" use:fit={w}>{label}</a>{/each}
        </nav>
        <button class="find" aria-label="Buscar">
          <svg width="32" height="32" viewBox="0 0 32 32" fill="none" stroke="#cbd5e1" stroke-width="2.600" stroke-linecap="round"><circle cx="14.700" cy="14.700" r="11" /><path d="M23 23 28.500 28.500" /></svg>
        </button>
      </header>

      <section class="hero">
        <div class="lockup">
          {@render brandmark('mark-lg')}
          <div class="wordmark"><span use:fit={479}>Invenor</span><i></i></div>
        </div>
        <h1>
          <span class="line first" use:fit={1445}>infraestructura que se</span>
          <span class="line second"><span use:fit={809}>convierte en</span><em use:fit={782}>rentabilidad</em></span>
        </h1>
        <p>
          <span class="line" use:fit={1761}>Desarrollamos activos estratégicos en el norte de Chile, transformando infraestructura</span>
          <span class="line" use:fit={1116}>en oportunidades de inversión sostenibles y rentables.</span>
        </p>
        <button class="cta">
          <span use:fit={438}>Explorar Oportunidades</span>
          <svg width="40" height="40" viewBox="0 0 24 24" fill="none" stroke="#fff" stroke-width="2.300" stroke-linecap="round" stroke-linejoin="round"><path d="M8 4 16 12 8 20" /></svg>
        </button>
      </section>

      <button class="chat" aria-label="Chat">
        <svg width="48" height="48" viewBox="0 0 24 24" fill="none" stroke="#fff" stroke-width="2" stroke-linecap="round" stroke-linejoin="round"><path d="M7.900 20A9 9 0 1 0 4 16.100L2 22Z" /></svg>
      </button>
    </div>
  </main>

  <footer class="dock">
    {#each dock as item}
      {#if item.k === 'sep'}
        <div class="sep"><i></i></div>
      {:else}
        <div class="app">
          <svg class="app-icon" viewBox="0 0 80 80">{@render app(item.k)}</svg>
          {#if item.badge}<span class="badge" class:wide={item.badge.length > 2}>{item.badge}</span>{/if}
          {#if item.dot}<i class="dot"></i>{/if}
        </div>
      {/if}
    {/each}
  </footer>
</div>

<style>
  :global(body) { margin: 0; overflow: hidden; background: #0f1629; }
  * { box-sizing: border-box; }
  svg { display: block; flex: none; overflow: visible; }
  .defs { position: absolute; }
  i { display: block; flex: none; font-style: normal; }
  button { border: 0; padding: 0; font: inherit; }
  span, a, b, em { white-space: pre; flex: none; }

  .desktop {
    position: relative; width: 3420px; height: 2214px; overflow: hidden;
    background: linear-gradient(90deg, #4969a0, #8199c9);
    font-family: Inter, 'Liberation Sans', sans-serif;
  }
  .grass { position: absolute; left: 0; top: 2050px; width: 3420px; height: 164px; }
  .gadget { position: absolute; left: 3242px; top: 98px; width: 96px; height: 24px; border-radius: 8px; background: #33373c; border: 6px solid #868d93; border-width: 6px 14px; }

  .menubar {
    display: flex; align-items: center; height: 76px; padding: 0 34px 2px 38px;
    background: linear-gradient(90deg, #4969a0, #5876ad 60%, #6483b5);
    color: #fff; font-size: 25.500px; font-weight: 500; line-height: 32px;
  }
  .apple { width: 32px; height: 32px; }
  .menus { display: flex; gap: 40.500px; margin-left: 38px; }
  .menus b { font-weight: 700; }
  .status { display: flex; align-items: center; margin-left: auto; }
  .m36 { margin-left: 36px; }
  .m9 { margin-left: 9px; }
  .wifi { margin-left: 38px; }
  .pct { font-size: 22.500px; margin-left: 37px; }
  .date { margin-left: 38px; }
  .time { margin-left: 15px; }

  .window { position: absolute; overflow: hidden; }
  .excel {
    left: 2px; top: 77px; width: 3182px; height: 300px; border-radius: 22px; background: #1a1a1a;
    border: 2px solid #5a5c60; outline: 1px solid #0a0a0a;
    display: flex; align-items: flex-start; color: #858585; font-size: 24px; line-height: 32px; padding-left: 24px;
  }
  .xl-left, .xl-title, .xl-search { display: flex; align-items: center; height: 60px; }
  .gdot { width: 24px; height: 24px; border-radius: 50%; background: #3a3a3a; margin-right: 16px; }
  .auto { margin-left: 36px; }
  .knob { width: 24px; height: 24px; border-radius: 50%; background: #6a6a6a; margin: 0 54px 0 26px; }
  .xl-title { margin-left: 730px; color: #b4b4b4; gap: 12px; }
  .xl-search { margin: 10px 0 0 842px; width: 560px; height: 42px; border: 2px solid #2e2e2e; border-radius: 10px; padding-left: 12px; gap: 18px; color: #4a4a4a; }
  .xl-share { margin: 14px 0 0 28px; }
  .back { left: 26px; top: 111px; width: 3394px; height: 200px; border-radius: 20px; background: #2b2d2f; border: 2px solid #66686b; outline: 1px solid #050505; }
  .chrome { left: 0; top: 119px; width: 3420px; height: 1945px; border-radius: 24px; background: #d3e8c1; box-shadow: 0 0 0 2px #06070a; display: flex; flex-direction: column; }

  .tabs { display: flex; align-items: center; height: 81px; flex: none; border-top: 2px solid #e4f2d8; padding-bottom: 1px; }
  .lights { display: flex; gap: 16px; width: 178px; padding-left: 42px; }
  .lights i { width: 24px; height: 24px; border-radius: 50%; }
  .red { background: #ec6a5e; }
  .amber { background: #f4bf4f; }
  .green { background: #61c554; }
  .tab { width: 72px; display: flex; justify-content: center; align-items: center; flex: none; }
  .tab.narrow { width: 70px; }
  .bar { width: 4px; height: 32px; background: #fff; margin: 0 -2px; border-radius: 1px; }
  .fav { width: 32px; height: 32px; }
  .ring { width: 40px; height: 40px; }
  .tab.active { position: relative; width: 64px; height: 70px; margin: 11px 7px 0 2px; padding-bottom: 14px; background: #fff; border-radius: 22px 22px 0 0; align-self: flex-start; }
  .tab.active::before, .tab.active::after { content: ''; position: absolute; bottom: 2px; width: 24px; height: 24px; }
  .tab.active::before { right: 100%; background: radial-gradient(circle at 0 0, transparent 23.500px, #fff 24px); }
  .tab.active::after { left: 100%; background: radial-gradient(circle at 100% 0, transparent 23.500px, #fff 24px); }
  .plus { margin-left: 21px; }
  .chev { margin: 0 12px 0 auto; width: 56px; height: 56px; border-radius: 18px; background: #fff; display: flex; align-items: center; justify-content: center; }

  .toolbar { display: flex; align-items: center; height: 92px; flex: none; background: #fff; border-radius: 20px 20px 0 0; padding-right: 12px; }
  .navs { display: flex; gap: 44px; width: 240px; padding-left: 30px; }
  .omnibox { display: flex; align-items: center; width: 2518px; height: 68px; border-radius: 34px; background: #e1e1e1; color: #26282a; font-size: 27.300px; padding: 0 32px 0 10px; }
  .site { width: 48px; height: 48px; border-radius: 50%; background: #fff; display: flex; align-items: center; justify-content: center; margin-right: 16px; }
  .star { margin-left: auto; }
  .puzzle { margin-left: 36px; }
  .vline { width: 4px; height: 32px; border-radius: 2px; background: #c9e5b4; }
  .toolbar .vline { margin-left: 32px; }
  .download { margin-left: 35px; }
  .avatar { margin-left: 35px; }
  .restart { display: flex; align-items: center; justify-content: space-between; margin-left: auto; width: 374px; height: 68px; border-radius: 34px; background: #d3e8c1; padding: 0 29px 0 24px; color: #2a3326; font-size: 25.500px; font-weight: 500; }

  .bookmarks { display: flex; align-items: center; height: 68px; flex: none; background: #fff; padding: 0 62px 12px 26px; color: #1f2022; font-size: 23.500px; line-height: 30px; }
  .bookmarks .vline { margin: 0 28px 0 30px; }
  .marks { display: flex; gap: 34px; }
  .mark { display: flex; align-items: center; gap: 11px; flex: none; }
  .more { margin-left: auto; }

  .page { position: relative; flex: 1; border: 2px solid #3f4352; border-top-color: #cfd1d3; border-left-color: #2b3042; border-right-color: #2b3042; border-radius: 0 0 24px 24px; background: #111728; }
  .site-head { display: flex; align-items: center; height: 130px; border-bottom: 2px solid #344050; padding: 0 492px 0 500px; }
  .small-logo { position: relative; width: 129px; height: 89px; margin-bottom: 2px; }
  :global(.mark-sm) { width: 129px; height: 89px; }
  .white-dot { position: absolute; left: 65px; top: 45px; width: 13px; height: 13px; border-radius: 50%; background: #fff; }
  .site-nav { display: flex; gap: 64.500px; margin-left: 557px; font-size: 31px; line-height: 40px; }
  .site-nav a { color: #ccd4e1; text-decoration: none; }
  .site-nav .current { color: #68d09c; font-weight: 600; }
  .find { margin-left: auto; width: 76px; height: 76px; border-radius: 16px; background: #1e2635; border: 2px solid #323d4d; display: flex; align-items: center; justify-content: center; }

  .hero { display: flex; flex-direction: column; align-items: center; padding-top: 226px; color: #fff; }
  .lockup { width: 501px; margin-right: 38px; }
  :global(.mark-lg) { width: 360px; height: 247px; margin-left: 92px; }
  .wordmark { display: flex; height: 120px; margin-top: 13px; margin-left: -7px; font-size: 133px; line-height: 120px; font-weight: 800; }
  .wordmark i { width: 26px; height: 26px; border-radius: 50%; background: #56b787; margin: 84px 0 0 3px; }
  h1 { margin: 60px 0 0; font-size: 140px; line-height: 144px; font-weight: 700; display: flex; flex-direction: column; align-items: center; }
  .first { margin-right: 4px; }
  .second { display: flex; margin-right: 8px; }
  h1 em { font-style: normal; color: #69d09d; margin-left: 34px; }
  p { margin: 62px 0 0; font-size: 46.500px; line-height: 64.500px; color: #ccd4e1; display: flex; flex-direction: column; align-items: center; }
  .cta { display: flex; align-items: center; justify-content: space-between; margin-top: 94px; width: 670px; height: 136px; border-radius: 16px; background: #56b787; color: #fff; font-size: 39px; font-weight: 600; padding: 0 84px 2px 80px; box-shadow: 0 50px 100px -24px rgba(86, 183, 135, .28); }
  .chat { position: absolute; right: 46px; bottom: 46px; width: 112px; height: 112px; border-radius: 50%; background: #56b787; display: flex; align-items: center; justify-content: center; box-shadow: 0 20px 30px rgba(0, 0, 0, .12); }

  .dock { position: absolute; left: 92px; top: 2074px; width: 3238px; height: 130px; border-radius: 40px; border: 2px solid #5b5e44; background: linear-gradient(90deg, #2b2c1b, #313319 40%, #42451a); box-shadow: 0 0 0 2px #0c0e06; display: flex; padding-left: 1px; }
  .app { position: relative; width: 108px; display: flex; justify-content: center; padding-top: 17px; flex: none; }
  .app-icon { width: 81px; height: 81px; }
  .sep { width: 48px; display: flex; justify-content: center; padding-top: 16px; flex: none; }
  .sep i { width: 2px; height: 94px; background: #74774f; }
  .dot { position: absolute; left: 50px; bottom: 2px; width: 8px; height: 8px; border-radius: 50%; background: #b4ba9f; }
  .badge { position: absolute; left: 66px; top: 7px; width: 41px; height: 40px; border-radius: 20px; background: #dc4a3c; color: #fff; font-size: 21px; line-height: 40px; text-align: center; }
  .badge.wide { left: 44px; width: 64px; font-size: 20px; letter-spacing: -.6px; }

  text { text-anchor: middle; font-family: Inter, 'Liberation Sans', sans-serif; }
  .t-in { font-size: 24px; font-weight: 800; fill: #fff; }
  .t-24 { font-size: 15px; font-weight: 700; fill: #dd6b46; }
  .t-df { font-family: 'Liberation Sans', sans-serif; font-size: 24px; font-weight: 700; fill: #111; }
  .t-uu { font-size: 24px; font-weight: 800; fill: #d7dbdd; }
  .t-ns { font-family: 'Liberation Serif', serif; font-size: 22px; font-weight: 700; fill: #222; }
  .t-ax { font-size: 9px; font-weight: 600; fill: #fff; }
  .t-kk { font-family: 'Liberation Serif', serif; font-size: 38px; fill: #fff; }
  .t-off { font-size: 22px; font-weight: 600; fill: #fff; }
  .t-sept { font-size: 16px; font-weight: 600; fill: #fbe3e0; letter-spacing: .5px; }
  .t-16 { font-size: 49px; font-weight: 300; fill: #1d1d1f; letter-spacing: -1px; }
  .t-31 { font-family: 'Liberation Serif', serif; font-size: 44px; font-weight: 700; fill: #000; }
  .t-pro { font-family: Roboto, sans-serif; font-size: 23px; fill: #fff; }
  .t-pdf { font-size: 13px; font-weight: 600; fill: #fff; stroke: #6a6f74; stroke-width: .6; }
</style>
